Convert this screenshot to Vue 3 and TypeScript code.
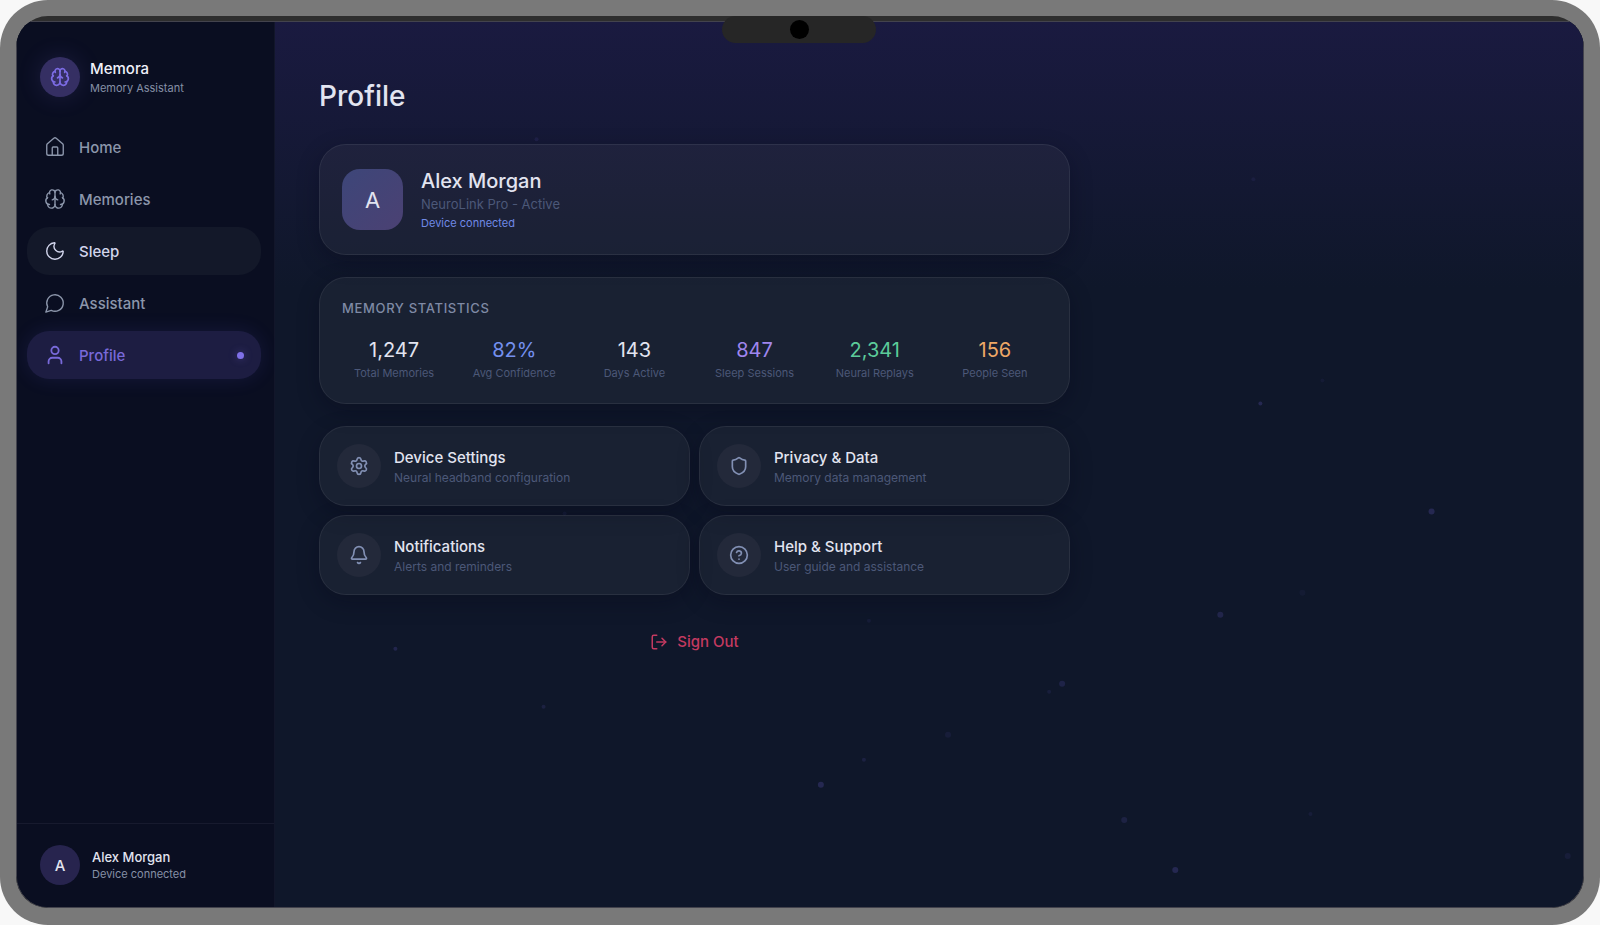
<script setup lang="ts">
import { ref } from 'vue'

interface Glyph {
  paths: string[]
  circles?: [number, number, number][]
}

const icons: Record<string, Glyph> = {
  brain: {
    paths: [
      'M12 18V5',
      'M15 13a4.17 4.17 0 0 1-3-4 4.17 4.17 0 0 1-3 4',
      'M17.598 6.5A3 3 0 1 0 12 5a3 3 0 1 0-5.598 1.5',
      'M17.997 5.125a4 4 0 0 1 2.526 5.77',
      'M18 18a4 4 0 0 0 2-7.464',
      'M19.967 17.483A4 4 0 1 1 12 18a4 4 0 1 1-7.967-.517',
      'M6 18a4 4 0 0 1-2-7.464',
      'M6.003 5.125a4 4 0 0 0-2.526 5.77',
    ],
  },
  home: {
    paths: [
      'M15 21v-8a1 1 0 0 0-1-1h-4a1 1 0 0 0-1 1v8',
      'M3 10a2 2 0 0 1 .709-1.528l7-5.999a2 2 0 0 1 2.582 0l7 5.999A2 2 0 0 1 21 10v9a2 2 0 0 1-2 2H5a2 2 0 0 1-2-2z',
    ],
  },
  moon: {
    paths: [
      'M20.985 12.486a9 9 0 1 1-9.473-9.472c.405-.022.617.46.402.803a6 6 0 0 0 8.268 8.268c.344-.215.825-.004.803.401',
    ],
  },
  chat: {
    paths: ['M7.9 20A9 9 0 1 0 4 16.1L2 22Z'],
  },
  user: {
    paths: ['M19 21v-2a4 4 0 0 0-4-4H9a4 4 0 0 0-4 4v2'],
    circles: [[12, 7, 4]],
  },
  settings: {
    paths: [
      'M9.671 4.136a2.34 2.34 0 0 1 4.659 0 2.34 2.34 0 0 0 3.319 1.915 2.34 2.34 0 0 1 2.33 4.033 2.34 2.34 0 0 0 0 3.831 2.34 2.34 0 0 1-2.33 4.033 2.34 2.34 0 0 0-3.319 1.915 2.34 2.34 0 0 1-4.659 0 2.34 2.34 0 0 0-3.32-1.915 2.34 2.34 0 0 1-2.33-4.033 2.34 2.34 0 0 0 0-3.831A2.34 2.34 0 0 1 6.35 6.051a2.34 2.34 0 0 0 3.319-1.915',
    ],
    circles: [[12, 12, 3]],
  },
  shield: {
    paths: [
      'M20 13c0 5-3.5 7.5-7.66 8.95a1 1 0 0 1-.67-.01C7.5 20.5 4 18 4 13V6a1 1 0 0 1 1-1c2 0 4.5-1.2 6.24-2.72a1.17 1.17 0 0 1 1.52 0C14.51 3.81 17 5 19 5a1 1 0 0 1 1 1z',
    ],
  },
  bell: {
    paths: [
      'M10.268 21a2 2 0 0 0 3.464 0',
      'M3.262 15.326A1 1 0 0 0 4 17h16a1 1 0 0 0 .74-1.673C19.41 13.956 18 12.499 18 8A6 6 0 0 0 6 8c0 4.499-1.411 5.956-2.738 7.326',
    ],
  },
  help: {
    paths: ['M9.09 9a3 3 0 0 1 5.83 1c0 2-3 3-3 3', 'M12 17h.01'],
    circles: [[12, 12, 10]],
  },
  logout: {
    paths: ['m16 17 5-5-5-5', 'M21 12H9', 'M9 21H5a2 2 0 0 1-2-2V5a2 2 0 0 1 2-2h4'],
  },
}

const nav = [
  { label: 'Home', icon: 'home' },
  { label: 'Memories', icon: 'brain' },
  { label: 'Sleep', icon: 'moon' },
  { label: 'Assistant', icon: 'chat' },
  { label: 'Profile', icon: 'user' },
]
const active = ref('Profile')
const highlighted = ref('Sleep')

const stats = [
  { value: '1,247', label: 'Total Memories', tone: 'plain' },
  { value: '82%', label: 'Avg Confidence', tone: 'blue' },
  { value: '143', label: 'Days Active', tone: 'plain' },
  { value: '847', label: 'Sleep Sessions', tone: 'violet' },
  { value: '2,341', label: 'Neural Replays', tone: 'green' },
  { value: '156', label: 'People Seen', tone: 'orange' },
]

const actions = [
  { title: 'Device Settings', note: 'Neural headband configuration', icon: 'settings' },
  { title: 'Privacy & Data', note: 'Memory data management', icon: 'shield' },
  { title: 'Notifications', note: 'Alerts and reminders', icon: 'bell' },
  { title: 'Help & Support', note: 'User guide and assistance', icon: 'help' },
]

const particles: [number, number, number, number][] = [
  [262, 117, 2, 0.1],
  [978, 157, 2, 0.07],
  [1047, 358, 2, 0.06],
  [985, 381, 2, 0.2],
  [1156, 489, 3, 0.2],
  [290, 491, 2, 0.07],
  [1027, 570, 3, 0.05],
  [945, 592, 3, 0.17],
  [594, 598, 2, 0.07],
  [121, 626, 2, 0.18],
  [787, 661, 3, 0.15],
  [774, 669, 2, 0.09],
  [269, 684, 2, 0.12],
  [673, 712, 3, 0.08],
  [589, 737, 2, 0.12],
  [546, 762, 3, 0.2],
  [849, 797, 3, 0.13],
  [1035, 791, 2, 0.08],
  [1292, 833, 3, 0.08],
  [900, 847, 3, 0.2],
]
</script>

<template>
  <div class="device">
    <div class="screen">
      <div class="notch"><span class="camera"></span></div>
      <div class="app">
        <aside class="sidebar">
          <div class="brand">
            <span class="brand-mark">
              <svg class="icon bold" viewBox="0 0 24 24" aria-hidden="true">
                <path v-for="d in icons.brain.paths" :key="d" :d="d" />
              </svg>
            </span>
            <div>
              <div class="brand-name">Memora</div>
              <div class="caption">Memory Assistant</div>
            </div>
          </div>

          <nav class="nav">
            <button
              v-for="item in nav"
              :key="item.label"
              type="button"
              class="nav-item"
              :class="{ active: item.label === active, highlighted: item.label === highlighted }"
              @click="active = item.label"
            >
              <svg class="icon icon-lg" viewBox="0 0 24 24" aria-hidden="true">
                <path v-for="d in icons[item.icon].paths" :key="d" :d="d" />
                <circle v-for="(c, i) in icons[item.icon].circles" :key="i" :cx="c[0]" :cy="c[1]" :r="c[2]" />
              </svg>
              <span>{{ item.label }}</span>
              <span v-if="item.label === active" class="nav-dot"></span>
            </button>
          </nav>

          <div class="account">
            <span class="account-avatar">A</span>
            <div>
              <div class="account-name">Alex Morgan</div>
              <div class="caption">Device connected</div>
            </div>
          </div>
        </aside>

        <main class="main">
          <svg class="particles" viewBox="0 0 1308 884" preserveAspectRatio="xMidYMid slice" aria-hidden="true">
            <circle v-for="(p, i) in particles" :key="i" :cx="p[0]" :cy="p[1]" :r="p[2]" :fill-opacity="p[3]" />
          </svg>
          <div class="content">
            <h1 class="title">Profile</h1>

            <section class="card profile">
              <span class="profile-avatar">A</span>
              <div>
                <h2 class="profile-name">Alex Morgan</h2>
                <p class="profile-plan">NeuroLink Pro - Active</p>
                <p class="profile-status">Device connected</p>
              </div>
            </section>

            <section class="card stats">
              <h2 class="stats-title">Memory Statistics</h2>
              <div class="stats-grid">
                <div v-for="s in stats" :key="s.label">
                  <div class="stat-value" :class="s.tone">{{ s.value }}</div>
                  <div class="stat-label">{{ s.label }}</div>
                </div>
              </div>
            </section>

            <div class="actions">
              <button v-for="a in actions" :key="a.title" type="button" class="card action">
                <span class="action-icon">
                  <svg class="icon bold" viewBox="0 0 24 24" aria-hidden="true">
                    <path v-for="d in icons[a.icon].paths" :key="d" :d="d" />
                    <circle v-for="(c, i) in icons[a.icon].circles" :key="i" :cx="c[0]" :cy="c[1]" :r="c[2]" />
                  </svg>
                </span>
                <span>
                  <span class="action-title">{{ a.title }}</span>
                  <span class="action-note">{{ a.note }}</span>
                </span>
              </button>
            </div>

            <button type="button" class="sign-out">
              <svg class="icon icon-sm bold" viewBox="0 0 24 24" aria-hidden="true">
                <path v-for="d in icons.logout.paths" :key="d" :d="d" />
              </svg>
              <span>Sign Out</span>
            </button>
          </div>
        </main>
      </div>
    </div>
  </div>
</template>

<style>
body {
  margin: 0;
  background: #f8f8f8;
}
</style>

<style scoped>
.device,
.device * {
  box-sizing: border-box;
}
.device {
  display: flex;
  min-height: 100vh;
  padding: 16px 16px 17px;
  border-radius: 48px;
  background: #797979;
  font-family: Inter, 'Liberation Sans', sans-serif;
  color: #e2e4f0;
}
.screen {
  position: relative;
  display: flex;
  flex: 1;
  padding-top: 5px;
  border-radius: 32px;
  background: #2e2e2e;
  overflow: hidden;
}
.notch {
  position: absolute;
  z-index: 2;
  top: 0;
  left: 50%;
  display: flex;
  align-items: center;
  justify-content: center;
  width: 154px;
  height: 27px;
  margin-left: -78px;
  border-radius: 14px;
  background: #262626;
}
.camera {
  width: 19px;
  height: 19px;
  border-radius: 50%;
  background: #000;
}
.app {
  display: flex;
  flex: 1;
  border: 1px solid #43434d;
  border-radius: 0 0 32px 32px;
  background: #0f172a;
  overflow: hidden;
}
h1,
h2,
p {
  margin: 0;
}
button {
  border: 0;
  background: none;
  font: inherit;
  color: inherit;
  text-align: left;
  cursor: pointer;
}
.icon {
  flex: none;
  width: 20px;
  height: 20px;
  fill: none;
  stroke: currentColor;
  stroke-width: 1.5;
  stroke-linecap: round;
  stroke-linejoin: round;
}
.icon.bold {
  stroke-width: 2;
}
.icon-sm {
  width: 18px;
  height: 18px;
}
.icon-lg {
  width: 22px;
  height: 22px;
}

.sidebar {
  display: flex;
  flex: none;
  flex-direction: column;
  width: 258px;
  border-right: 1px solid #12162a;
  background: #0a0e21;
}
.brand {
  display: flex;
  align-items: center;
  gap: 10px;
  padding: 35px 23px 26px;
}
.brand-mark {
  display: flex;
  align-items: center;
  justify-content: center;
  width: 40px;
  height: 40px;
  border-radius: 50%;
  background: #352f63;
  color: #7c6ce4;
  box-shadow: 0 0 24px rgba(124, 108, 228, 0.16);
}
.brand-name {
  font-size: 15px;
  font-weight: 500;
  line-height: 22px;
  color: #f0f1fa;
}
.caption {
  font-size: 11px;
  line-height: 16px;
  color: #8690a6;
}
.nav {
  display: flex;
  flex-direction: column;
  gap: 4px;
  padding: 0 13px 0 10px;
}
.nav-item {
  display: flex;
  align-items: center;
  gap: 13px;
  height: 48px;
  padding: 0 17px;
  border-radius: 22px;
  font-size: 15px;
  font-weight: 500;
  color: #8c96ab;
}
.nav-item.highlighted {
  background: #131829;
  color: #d2d5ec;
}
.nav-item.active {
  background: #1d1d42;
  color: #7869d9;
  box-shadow: 0 0 20px rgba(108, 99, 255, 0.12);
}
.nav-item.active .icon {
  stroke-width: 2;
}
.nav-dot {
  width: 7px;
  height: 7px;
  margin-left: auto;
  border-radius: 50%;
  background: #7f70e8;
  box-shadow: 0 0 8px rgba(124, 108, 228, 0.4);
}
.account {
  display: flex;
  align-items: center;
  gap: 12px;
  margin-top: auto;
  padding: 21px 23px 22px;
  border-top: 1px solid #171a2e;
}
.account-avatar {
  display: flex;
  align-items: center;
  justify-content: center;
  width: 40px;
  height: 40px;
  border-radius: 50%;
  background: #27244e;
  font-size: 15px;
  font-weight: 500;
}
.account-name {
  font-size: 13px;
  font-weight: 500;
  line-height: 18px;
}

.main {
  position: relative;
  flex: 1;
  min-width: 0;
  padding: 56px 44px 44px;
  background: linear-gradient(180deg, #1a1a40 0, #0f172a 30%);
}
.particles {
  position: absolute;
  inset: 0;
  width: 100%;
  height: 100%;
  fill: #7c6cf0;
}
.content {
  position: relative;
  max-width: 751px;
}
.title {
  margin-bottom: 30px;
  font-size: 28px;
  font-weight: 500;
  line-height: 36px;
}
.card {
  border: 1px solid rgba(255, 255, 255, 0.07);
  border-radius: 27px;
  background: rgba(255, 245, 240, 0.045);
  box-shadow: 0 7px 22px rgba(8, 8, 24, 0.3);
}
.profile {
  display: flex;
  align-items: center;
  gap: 18px;
  padding: 22px;
  margin-bottom: 22px;
}
.profile-avatar {
  display: flex;
  align-items: center;
  justify-content: center;
  width: 61px;
  height: 61px;
  border-radius: 18px;
  background: linear-gradient(135deg, #3d4679, #4b4173);
  font-size: 22px;
}
.profile-name {
  font-size: 20px;
  font-weight: 500;
  line-height: 28px;
}
.profile-plan {
  font-size: 13px;
  line-height: 19px;
  color: #4c5878;
}
.profile-status {
  font-size: 11px;
  line-height: 18px;
  color: #7089e6;
}
.stats {
  padding: 21px 22px;
  margin-bottom: 22px;
}
.stats-title {
  margin-bottom: 19px;
  font-size: 13px;
  font-weight: 500;
  line-height: 18px;
  letter-spacing: 0.05em;
  text-transform: uppercase;
  color: #7f8aa5;
}
.stats-grid {
  display: grid;
  grid-template-columns: repeat(6, 1fr);
  gap: 16px;
  text-align: center;
}
.stat-value {
  margin-bottom: 1px;
  font-size: 20px;
  line-height: 28px;
}
.stat-label {
  font-size: 11px;
  line-height: 17px;
  color: #4c5878;
}
.blue {
  color: #7490ee;
}
.violet {
  color: #9f86ee;
}
.green {
  color: #5ccb9a;
}
.orange {
  color: #eea866;
}
.actions {
  display: grid;
  grid-template-columns: 1fr 1fr;
  gap: 9px;
}
.action {
  display: flex;
  align-items: center;
  gap: 13px;
  padding: 17px;
}
.action-icon {
  display: flex;
  flex: none;
  align-items: center;
  justify-content: center;
  width: 44px;
  height: 44px;
  border-radius: 50%;
  background: #23293a;
  color: #8290b4;
}
.action-title,
.action-note {
  display: block;
}
.action-title {
  font-size: 15px;
  font-weight: 500;
  line-height: 23px;
}
.action-note {
  font-size: 12px;
  line-height: 18px;
  color: #4c5878;
}
.sign-out {
  display: flex;
  align-items: center;
  gap: 9px;
  margin: 27px auto 0;
  padding: 10px 18px;
  font-size: 15px;
  font-weight: 500;
  line-height: 20px;
  color: #c43a60;
}
</style>
